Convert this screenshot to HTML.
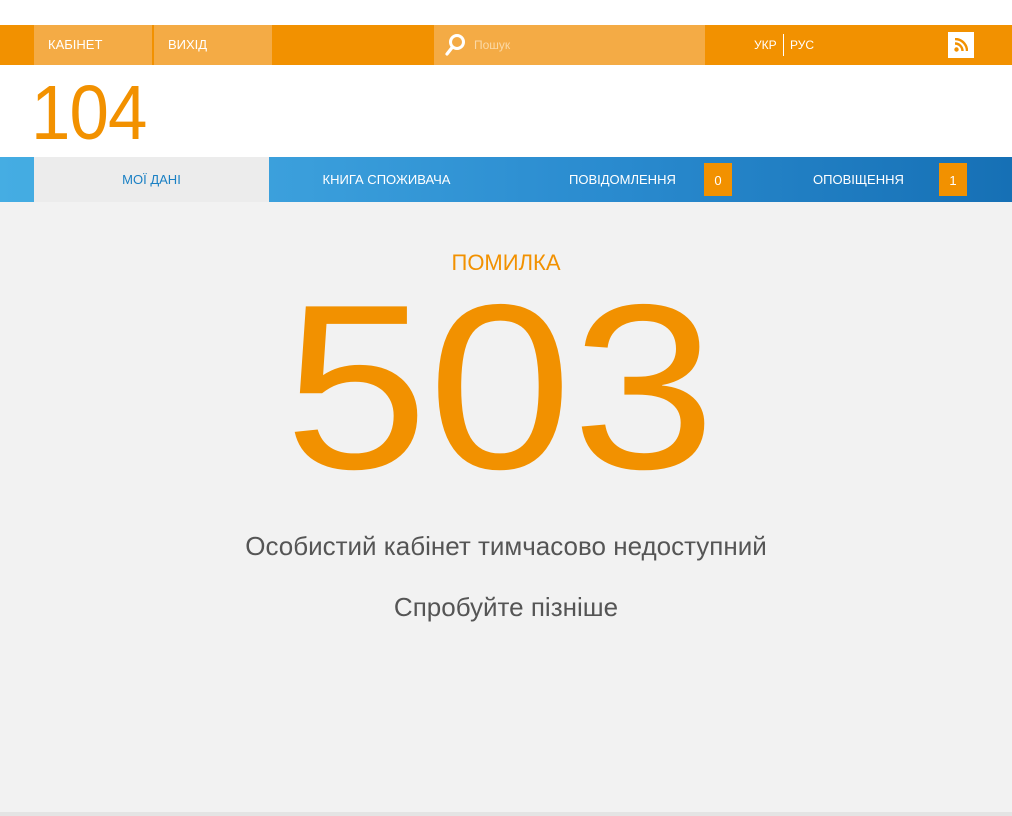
<!DOCTYPE html>
<html><head><meta charset="utf-8"><style>
*{margin:0;padding:0;box-sizing:border-box}
body{width:1012px;height:816px;background:#f2f2f2;font-family:"Liberation Sans",sans-serif;position:relative;overflow:hidden}
.a{position:absolute}
.top{left:0;top:0;width:1012px;height:25px;background:#fff}
.bar{left:0;top:25px;width:1012px;height:40px;background:#f29100}
.p{background:#f4ab45;height:40px;top:25px;color:#fff;font-size:13px;line-height:40px}
.hdr{left:0;top:65px;width:1012px;height:92px;background:#fff}
.nav{left:0;top:157px;width:1012px;height:45px;background:linear-gradient(90deg,#45ade3 0%,#3a9edb 30%,#2a8bcf 60%,#1670b5 100%)}
.nt{top:157px;height:45px;line-height:45px;color:#fff;font-size:13px;text-align:center}
.badge{background:#f29100;color:#fff;font-size:13px;width:28px;height:33px;top:163px;line-height:35px;text-align:center}
.c{left:0;width:1012px;text-align:center;line-height:1;white-space:nowrap}
</style></head><body>
<div class="a top"></div>
<div class="a bar"></div>
<div class="a p" style="left:34px;width:118px;padding-left:14px">КАБІНЕТ</div>
<div class="a p" style="left:154px;width:118px;padding-left:14px">ВИХІД</div>
<div class="a p" style="left:434px;width:271px;padding-left:40px;font-size:12px;color:#fbd9a6">Пошук</div>
<svg class="a" style="left:444px;top:33px" width="22" height="24" viewBox="0 0 22 24"><circle cx="13" cy="9" r="6.5" fill="none" stroke="#fff" stroke-width="3"/><line x1="8.5" y1="14" x2="3" y2="21" stroke="#fff" stroke-width="3.2" stroke-linecap="round"/></svg>
<div class="a" style="left:754px;top:25px;line-height:40px;color:#fff;font-size:12px">УКР</div>
<div class="a" style="left:783px;top:34px;width:1px;height:22px;background:#fff"></div>
<div class="a" style="left:790px;top:25px;line-height:40px;color:#fff;font-size:12px">РУС</div>
<div class="a" style="left:948px;top:32px;width:26px;height:26px;background:#fff"></div>
<svg class="a" style="left:954px;top:38px" width="14" height="14" viewBox="0 0 14 14"><circle cx="2.5" cy="11.5" r="2.2" fill="#f29100"/><path d="M1 5.5a7.5 7.5 0 0 1 7.5 7.5" fill="none" stroke="#f29100" stroke-width="2.4"/><path d="M1 1a12 12 0 0 1 12 12" fill="none" stroke="#f29100" stroke-width="2.4"/></svg>
<div class="a hdr"></div>
<div class="a" style="left:31px;top:75px;font-size:77px;color:#f29100;letter-spacing:-1px;line-height:1;transform:scaleX(0.92);transform-origin:left">104</div>
<div class="a nav"></div>
<div class="a nt" style="left:34px;width:235px;background:#ececec;color:#1a80c4">МОЇ ДАНІ</div>
<div class="a nt" style="left:269px;width:235px">КНИГА СПОЖИВАЧА</div>
<div class="a nt" style="left:504px;width:235px;text-align:left;padding-left:65px">ПОВІДОМЛЕННЯ</div>
<div class="a badge" style="left:704px">0</div>
<div class="a nt" style="left:739px;width:235px;text-align:left;padding-left:74px">ОПОВІЩЕННЯ</div>
<div class="a badge" style="left:939px">1</div>
<div class="a c" style="top:252px;font-size:22px;color:#f29100">ПОМИЛКА</div>
<div class="a c" style="left:-6px;top:269px;font-size:235px;color:#f29100;transform:scaleX(1.1)">503</div>
<div class="a c" style="top:533px;font-size:26px;color:#555">Особистий кабінет тимчасово недоступний</div>
<div class="a c" style="top:594px;font-size:26px;color:#555">Спробуйте пізніше</div>
<div class="a" style="left:0;top:812px;width:1012px;height:4px;background:#e4e4e4"></div>
</body></html>
